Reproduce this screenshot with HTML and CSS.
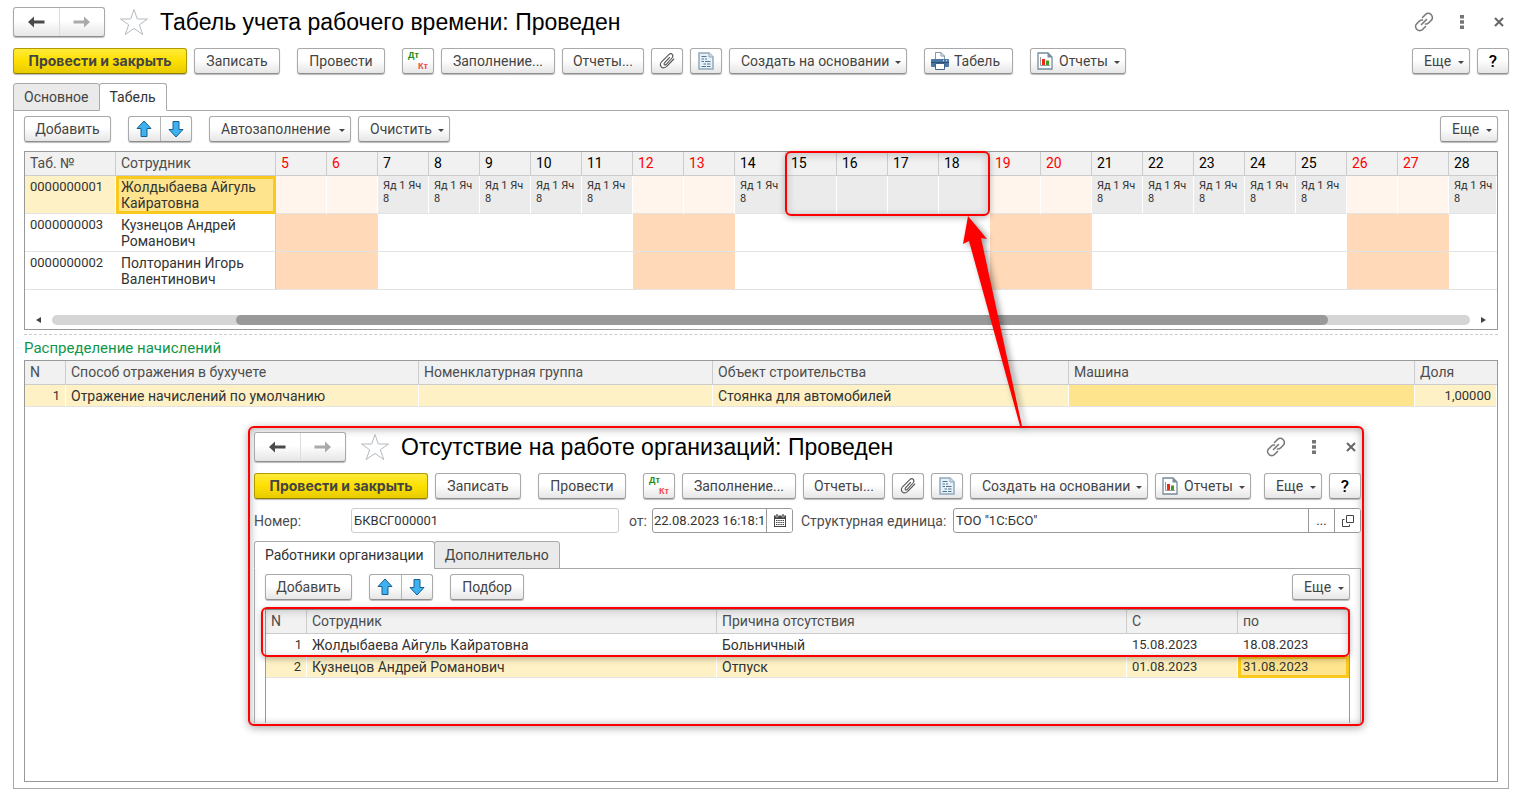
FILE: index.html
```html
<!DOCTYPE html>
<html lang="ru">
<head>
<meta charset="utf-8">
<title>Табель учета рабочего времени: Проведен</title>
<link rel="stylesheet" href="styles.css">
</head>
<body>
<svg class="sprite" aria-hidden="true">
  <symbol id="i-back" viewBox="0 0 18 12"><path d="M1 6 7 .5V4.500H17.500V7.500H7V11.500Z"/></symbol>
  <symbol id="i-fwd" viewBox="0 0 18 12"><path d="M17 6 11 .5V4.500H.5V7.500H11V11.500Z"/></symbol>
  <symbol id="i-star" viewBox="0 0 30 28"><path d="M15 1.500 18.300 11H28.500L20.300 16.800 23.800 26.500 15 20.500 6.200 26.500 9.700 16.800 1.500 11H11.700Z" fill="#fff" stroke="#b4bac0"/></symbol>
  <symbol id="i-link" viewBox="0 0 20 20"><g fill="none" stroke="#7a7a7a" stroke-width="1.600" stroke-linecap="round"><path d="M8.500 5.500 11.500 2.500C13 1 15.500 1 17 2.500S19 6.500 17.500 8L14.500 11C13.500 12 12.500 12.200 11.500 12"/><path d="M11.500 14.500 8.500 17.500C7 19 4.500 19 3 17.500S1 13.500 2.500 12L5.500 9C6.500 8 7.500 7.800 8.500 8"/><path d="M7.500 12.500 12.500 7.500"/></g></symbol>
  <symbol id="i-dots" viewBox="0 0 4 14"><path d="M0 0H4V3.500H0ZM0 5.200H4V8.700H0ZM0 10.400H4V14H0Z" fill="#757575"/></symbol>
  <symbol id="i-close" viewBox="0 0 10 10"><path d="M1 1 9 9M9 1 1 9" stroke="#666" stroke-width="2"/></symbol>
  <symbol id="i-up" viewBox="0 0 16 18"><path d="M8 1 15 8.500H11V16.500H5V8.500H1Z" fill="#3fb0f0" stroke="#14608f" stroke-linejoin="round"/></symbol>
  <symbol id="i-down" viewBox="0 0 16 18"><path d="M8 17 1 9.500H5V1.500H11V9.500H15Z" fill="#3fb0f0" stroke="#14608f" stroke-linejoin="round"/></symbol>
  <symbol id="i-clip" viewBox="0 0 18 18"><path d="M11.500 5.500 6.500 10.800C5.300 12.300 6.800 13.600 8.100 12.500L14 6C16.300 3 13.500.4 10.800 2.600L3.800 9.500C.3 13.700 4.300 17.900 8.500 14.600L15.800 7" fill="none" stroke="#555" stroke-width="1.100" stroke-linecap="round"/></symbol>
  <symbol id="i-doc" viewBox="0 0 16 18"><path d="M1 1H11L15 5V17H1Z" fill="#e8f1f8" stroke="#8fa9bc" stroke-width="1.500"/><path d="M11 1V5H15" fill="#cfe0ec" stroke="#8fa9bc"/><path d="M3.500 4.500H8.500M3.500 7H6M7 7H9M3.500 9.500H6M7 9.500H12.500M5.500 12H8M9 12H12.500M3.500 14.500H8M9 14.500H12.500" stroke="#4e7692" stroke-width="1.200"/></symbol>
  <symbol id="i-print" viewBox="0 0 18 18"><path d="M4.500 8V.5H10L13.500 4V8" fill="#fff" stroke="#8497a8"/><path d="M10 .5V4H13.500" fill="none" stroke="#8497a8"/><rect y="7" width="18" height="8" rx="1" fill="#4a77a5"/><path d="M0 10.500H18" stroke="#2c5074"/><path d="M12 8.700H13M15 8.700H16" stroke="#fff"/><path d="M4.500 11.500H13.500V17.500H4.500Z" fill="#fff" stroke="#3f6488"/></symbol>
  <symbol id="i-chart" viewBox="0 0 16 18"><path d="M1 1H11L15 5V17H1Z" fill="#fff" stroke="#748b9c" stroke-width="1.300"/><path d="M10.500 1V5.500H15Z" fill="#748b9c"/><path d="M3.500 5V13.500H13" fill="none" stroke="#999"/><path d="M5 7H8V13H5Z" fill="#f02818"/><path d="M9 8.500H12V13H9Z" fill="#3c9c1c"/></symbol>
  <symbol id="i-cal" viewBox="0 0 12 13"><path d="M0 1.500H12V13H0Z" fill="#444"/><path d="M2 0H4V3H2ZM8 0H10V3H8Z" fill="#444" stroke="#fff" stroke-width=".5"/><path d="M1 5H11V12H1Z" fill="#fff"/><path d="M2 6.500H10M2 8.500H10M2 10.500H10" stroke="#444" stroke-width="1.200" stroke-dasharray="1.500 .7"/></symbol>
  <symbol id="i-open" viewBox="0 0 12 12"><path d="M4.500.5H11.500V7.500H4.500ZM2.500 4.500H.5V11.500H7.500V9.500" fill="none" stroke="#444"/></symbol>
</svg>

<main class="window">
  <header class="titlebar">
    <div class="pair nav"><button aria-label="Назад"><svg class="arrow"><use href="#i-back"/></svg></button><button aria-label="Вперед" class="dim"><svg class="arrow"><use href="#i-fwd"/></svg></button></div>
    <svg class="star"><use href="#i-star"/></svg>
    <h1>Табель учета рабочего времени: Проведен</h1>
    <div class="tools"><svg class="link"><use href="#i-link"/></svg><svg class="dots"><use href="#i-dots"/></svg><svg class="close"><use href="#i-close"/></svg></div>
  </header>

  <div class="toolbar">
    <button class="btn primary">Провести и закрыть</button>
    <button class="btn w-save">Записать</button>
    <button class="btn w-post group">Провести</button>
    <button class="btn icon group" aria-label="Проводки"><span class="dk"><b>Дт</b><b>Кт</b></span></button>
    <button class="btn w-fill">Заполнение...</button>
    <button class="btn w-rep">Отчеты...</button>
    <button class="btn icon" aria-label="Файлы"><svg class="i18"><use href="#i-clip"/></svg></button>
    <button class="btn icon" aria-label="Документ"><svg class="i16"><use href="#i-doc"/></svg></button>
    <button class="btn drop w-create">Создать на основании<i class="caret"></i></button>
    <button class="btn w-print group"><svg class="i18"><use href="#i-print"/></svg>Табель</button>
    <button class="btn drop w-chart group"><svg class="i16"><use href="#i-chart"/></svg>Отчеты<i class="caret"></i></button>
    <button class="btn drop w-more end">Еще<i class="caret"></i></button>
    <button class="btn icon help">?</button>
  </div>

  <nav class="tabs"><button class="tab">Основное</button><button class="tab active">Табель</button></nav>

  <section class="panel">
    <div class="toolbar inner">
      <button class="btn w-add">Добавить</button>
      <div class="pair move group"><button aria-label="Вверх"><svg class="i16"><use href="#i-up"/></svg></button><button aria-label="Вниз"><svg class="i16"><use href="#i-down"/></svg></button></div>
      <button class="btn drop w-auto group">Автозаполнение<i class="caret"></i></button>
      <button class="btn drop w-clear">Очистить<i class="caret"></i></button>
      <button class="btn drop w-more end">Еще<i class="caret"></i></button>
    </div>

    <div class="frame">
      <table class="sheet">
        <colgroup><col class="c-num"><col class="c-emp"><col class="c-day" span="23"><col></colgroup>
        <thead><tr><th>Таб. №</th><th>Сотрудник</th><th class="day off">5</th><th class="day off">6</th><th class="day">7</th><th class="day">8</th><th class="day">9</th><th class="day">10</th><th class="day">11</th><th class="day off">12</th><th class="day off">13</th><th class="day">14</th><th class="day">15</th><th class="day">16</th><th class="day">17</th><th class="day">18</th><th class="day off">19</th><th class="day off">20</th><th class="day">21</th><th class="day">22</th><th class="day">23</th><th class="day">24</th><th class="day">25</th><th class="day off">26</th><th class="day off">27</th><th class="day">28</th></tr></thead>
        <tbody>
          <tr class="current"><td class="num">0000000001</td><td class="emp focus">Жолдыбаева Айгуль Кайратовна</td><td class="off"></td><td class="off"></td><td>Яд 1 Яч 8</td><td>Яд 1 Яч 8</td><td>Яд 1 Яч 8</td><td>Яд 1 Яч 8</td><td>Яд 1 Яч 8</td><td class="off"></td><td class="off"></td><td>Яд 1 Яч 8</td><td></td><td></td><td></td><td></td><td class="off"></td><td class="off"></td><td>Яд 1 Яч 8</td><td>Яд 1 Яч 8</td><td>Яд 1 Яч 8</td><td>Яд 1 Яч 8</td><td>Яд 1 Яч 8</td><td class="off"></td><td class="off"></td><td>Яд 1 Яч 8</td></tr>
          <tr><td class="num">0000000003</td><td class="emp">Кузнецов Андрей Романович</td><td class="off"></td><td class="off"></td><td></td><td></td><td></td><td></td><td></td><td class="off"></td><td class="off"></td><td></td><td></td><td></td><td></td><td></td><td class="off"></td><td class="off"></td><td></td><td></td><td></td><td></td><td></td><td class="off"></td><td class="off"></td><td></td></tr>
          <tr><td class="num">0000000002</td><td class="emp">Полторанин Игорь Валентинович</td><td class="off"></td><td class="off"></td><td></td><td></td><td></td><td></td><td></td><td class="off"></td><td class="off"></td><td></td><td></td><td></td><td></td><td></td><td class="off"></td><td class="off"></td><td></td><td></td><td></td><td></td><td></td><td class="off"></td><td class="off"></td><td></td></tr>
        </tbody>
      </table>
      <div class="scroll"><i class="tri left"></i><div class="track"><div class="thumb"></div></div><i class="tri right"></i></div>
    </div>

    <h2>Распределение начислений</h2>
    <div class="frame grow">
      <table class="list">
        <colgroup><col class="c-n"><col class="c-way"><col class="c-nom"><col class="c-obj"><col><col class="c-share"></colgroup>
        <thead><tr><th>N</th><th>Способ отражения в бухучете</th><th>Номенклатурная группа</th><th>Объект строительства</th><th>Машина</th><th>Доля</th></tr></thead>
        <tbody><tr class="current"><td class="right num">1</td><td>Отражение начислений по умолчанию</td><td></td><td>Стоянка для автомобилей</td><td class="selected"></td><td class="right num">1,00000</td></tr></tbody>
      </table>
    </div>
  </section>
</main>

<div class="mark days"></div>

<section class="dialog">
  <div class="content">
    <header class="titlebar">
      <div class="pair nav"><button aria-label="Назад"><svg class="arrow"><use href="#i-back"/></svg></button><button aria-label="Вперед" class="dim"><svg class="arrow"><use href="#i-fwd"/></svg></button></div>
      <svg class="star"><use href="#i-star"/></svg>
      <h1>Отсутствие на работе организаций: Проведен</h1>
      <div class="tools"><svg class="link"><use href="#i-link"/></svg><svg class="dots"><use href="#i-dots"/></svg><svg class="close"><use href="#i-close"/></svg></div>
    </header>
    <div class="toolbar">
      <button class="btn primary">Провести и закрыть</button>
      <button class="btn w-save">Записать</button>
      <button class="btn w-post group">Провести</button>
      <button class="btn icon group" aria-label="Проводки"><span class="dk"><b>Дт</b><b>Кт</b></span></button>
      <button class="btn w-fill">Заполнение...</button>
      <button class="btn w-rep">Отчеты...</button>
      <button class="btn icon" aria-label="Файлы"><svg class="i18"><use href="#i-clip"/></svg></button>
      <button class="btn icon" aria-label="Документ"><svg class="i16"><use href="#i-doc"/></svg></button>
      <button class="btn drop w-create">Создать на основании<i class="caret"></i></button>
      <button class="btn drop w-chart"><svg class="i16"><use href="#i-chart"/></svg>Отчеты<i class="caret"></i></button>
      <button class="btn drop w-more end">Еще<i class="caret"></i></button>
      <button class="btn icon help">?</button>
    </div>
    <div class="fields">
      <label class="l-num" for="number">Номер:</label>
      <input id="number" class="box pale" value="БКВСГ000001">
      <label class="l-date" for="date">от:</label>
      <div class="box combo date"><input id="date" value="22.08.2023 16:18:1"><button aria-label="Календарь"><svg class="cal"><use href="#i-cal"/></svg></button></div>
      <label class="l-org" for="org">Структурная единица:</label>
      <div class="box combo org"><input id="org" value='ТОО "1С:БСО"'><button aria-label="Выбрать">...</button><button aria-label="Открыть"><svg class="open"><use href="#i-open"/></svg></button></div>
    </div>
    <nav class="tabs"><button class="tab active">Работники организации</button><button class="tab">Дополнительно</button></nav>
    <div class="panel">
      <div class="toolbar inner">
        <button class="btn w-add">Добавить</button>
        <div class="pair move group"><button aria-label="Вверх"><svg class="i16"><use href="#i-up"/></svg></button><button aria-label="Вниз"><svg class="i16"><use href="#i-down"/></svg></button></div>
        <button class="btn w-pick group">Подбор</button>
        <button class="btn drop w-more end">Еще<i class="caret"></i></button>
      </div>
      <div class="frame grow">
        <table class="list">
          <colgroup><col class="c-n"><col><col><col class="c-date"><col class="c-date"></colgroup>
          <thead><tr><th>N</th><th>Сотрудник</th><th>Причина отсутствия</th><th>С</th><th>по</th></tr></thead>
          <tbody>
            <tr><td class="right num">1</td><td>Жолдыбаева Айгуль Кайратовна</td><td>Больничный</td><td class="num">15.08.2023</td><td class="num">18.08.2023</td></tr>
            <tr class="current"><td class="right num">2</td><td>Кузнецов Андрей Романович</td><td>Отпуск</td><td class="num">01.08.2023</td><td class="num focus">31.08.2023</td></tr>
          </tbody>
        </table>
      </div>
    </div>
  </div>
  <div class="mark rows"></div>
</section>

<svg class="pointer" viewBox="0 0 70 216" aria-hidden="true"><path d="M13 3 32 26 26 25 67 213H65L14 28 8 31Z" fill="#f00"/></svg>
</body>
</html>
```
FILE: styles.css
```css
* { box-sizing: border-box; }

body {
  position: relative;
  margin: 0;
  min-height: 100vh;
  background: #fff;
  color: #333;
  font: 14px/16px Roboto, "Liberation Sans", sans-serif;
  overflow: hidden;
}

button, input { font: inherit; color: inherit; margin: 0; }
svg { display: block; flex: none; }
h1, h2 { margin: 0; font-weight: 400; }
.sprite { position: absolute; width: 0; height: 0; }

.window {
  display: flex;
  flex-direction: column;
  min-height: 100vh;
  padding: 7px 12px 7px 13px;
}

.titlebar { display: flex; align-items: center; height: 30px; }
.titlebar h1 {
  margin-left: 11px;
  font: 23px/28px "Liberation Sans", sans-serif;
  color: #000;
  white-space: nowrap;
}
.star { width: 30px; height: 28px; margin-left: 14px; }
.tools { display: flex; align-items: center; gap: 26px; margin-left: auto; padding-right: 5px; }
.link { width: 20px; height: 20px; }
.dots { width: 4px; height: 14px; }
.close { width: 10px; height: 10px; margin-left: 4px; }

.btn, .pair {
  display: flex;
  align-items: center;
  flex: none;
  height: 26px;
  border: 1px solid #a9a9a9;
  border-bottom-color: #8e8e8e;
  border-radius: 3px;
  background: linear-gradient(#fff 45%, #e6e6e6);
  box-shadow: 0 1px 1px #bbb;
  color: #444;
}
.btn { justify-content: center; padding: 0; white-space: nowrap; }
.pair button {
  display: flex;
  align-items: center;
  justify-content: center;
  flex: 1;
  height: 100%;
  padding: 0;
  border: 0;
  background: none;
}
.pair button + button { border-left: 1px solid #b5b5b5; }
.nav { width: 92px; height: 30px; fill: #4a4a4a; }
.nav .dim { fill: #aaa; }
.nav button + button { border-left-color: #ddd; }
.arrow { width: 18px; height: 12px; }
.move { width: 64px; }

.btn.primary {
  width: 174px;
  border-color: #b09a00;
  border-bottom-color: #8e7c00;
  background: linear-gradient(#ffea3a, #fde000 50%, #e8cb00);
  font-family: Inter, sans-serif;
  font-weight: 700;
}
.icon { width: 32px; }
.i16 { width: 16px; height: 18px; }
.i18 { width: 18px; height: 18px; }
.drop { justify-content: flex-start; padding: 0 5px 0 11px; }
.caret {
  margin: 2px 0 0 auto;
  border: 3px solid transparent;
  border-top-color: #444;
  border-bottom: 0;
}
.help { color: #000; font-size: 17px; font-weight: 500; }
.dk { display: flex; flex-direction: column; width: 20px; font: 9px/11px "Liberation Sans", sans-serif; }
.dk b:first-child { color: #258a12; text-align: left; }
.dk b:last-child { color: #f54a4a; text-align: right; }
.w-save { width: 86px; }
.w-post { width: 88px; }
.w-fill { width: 114px; }
.w-rep { width: 82px; }
.w-create { width: 178px; }
.w-print { width: 89px; gap: 5px; justify-content: flex-start; padding-left: 6px; }
.w-chart { width: 96px; padding-left: 6px; gap: 6px; }
.w-more { width: 58px; }
.w-add { width: 87px; }
.w-auto { width: 142px; }
.w-clear { width: 92px; }
.w-pick { width: 74px; }

.toolbar { display: flex; gap: 7px; margin-top: 11px; }
.toolbar.inner { margin-top: 5px; }
.group { margin-left: 10px; }
.end { margin-left: auto; }

.tabs { display: flex; margin-top: 9px; position: relative; z-index: 1; }
.dialog .tabs { margin-top: 8px; }
.tab {
  height: 28px;
  padding: 0 10px 1px;
  border: 1px solid #a9a9a9;
  border-radius: 3px 3px 0 0;
  background: #eaeaea;
  color: #444;
}
.tab + .tab { margin-left: -1px; }
.tab.active { border-bottom-color: #fff; background: #fff; color: #333; }

.panel {
  display: flex;
  flex-direction: column;
  flex: 1;
  margin-top: -1px;
  padding: 0 10px 6px;
  border: 1px solid #a9a9a9;
}

.frame { margin-top: 9px; border: 1px solid #999; }
.grow { flex: 1; }

table { width: 100%; table-layout: fixed; border-collapse: separate; border-spacing: 0; }
th {
  height: 24px;
  padding: 0 0 1px 5px;
  border: solid #ccc;
  border-width: 0 1px 1px 0;
  background: #f1f1f1;
  color: #4d4d4d;
  font-weight: 400;
  text-align: left;
  white-space: nowrap;
}
td { overflow: hidden; border-bottom: 1px solid #e3e3e3; }
th:last-child { border-right: 0; }
.num { font-size: 13px; }

.c-num { width: 91px; }
.c-emp { width: 160px; }
.c-day { width: 51px; }
.sheet td {
  height: 38px;
  padding: 3px 0 0 5px;
  font-size: 11px;
  line-height: 13px;
  vertical-align: top;
}
.sheet .day { padding-left: 5px; color: #000; }
.sheet .day.off { color: #f00; }
.sheet .emp { border-right: 1px solid #ccc; font-size: 14px; line-height: 16px; }
.sheet .num { font-size: 13px; line-height: 16px; }
.sheet .off { background: #ffd9b8; }
.sheet th.off { background: #f1f1f1; }
.sheet .current td { border-right: 1px solid #fff; background: #ebebeb; }
.sheet .current .off { background: #fff5ec; }
.current td, .sheet .current .num { background: #fdf1c5; border-right: 1px solid #fff; }
.current .focus, .sheet .current .focus {
  border: 0;
  background: #fee48c;
  box-shadow: inset 0 0 0 3px #fac91e;
}

.scroll { display: flex; align-items: center; gap: 11px; margin: 25px 11px 4px; }
.track { flex: 1; height: 10px; border-radius: 5px; background: #d5d5d5; }
.thumb { width: 77%; height: 10px; margin-left: 13%; border-radius: 5px; background: #999; }
.tri { border: 3px solid transparent; }
.tri.left { border-right: 5px solid #444; border-left: 0; }
.tri.right { border-left: 5px solid #444; border-right: 0; }

h2 {
  margin-top: 4px;
  padding-top: 3px;
  border-top: 1px dashed #ccc;
  color: #0f9648;
  font: 15px/20px Roboto, sans-serif;
}
h2 + .frame { margin-top: 2px; }

.list td { height: 22px; padding: 0 5px; white-space: nowrap; }
.list .right { text-align: right; }
.list .current .selected { background: #fee48c; }
.c-n { width: 41px; }
.c-way { width: 353px; }
.c-nom { width: 294px; }
.c-obj { width: 356px; }
.c-share { width: 82px; }
.c-date { width: 111px; }

.mark {
  position: absolute;
  border: 2px solid #f00;
  border-radius: 6px;
  box-shadow: 0 2px 6px #0004, inset 0 2px 8px #0003;
}
.days { left: 785px; top: 151px; width: 205px; height: 65px; }
.rows { left: 11px; right: 12px; top: 179px; height: 50px; }

.dialog {
  position: absolute;
  left: 248px;
  right: 157px;
  top: 426px;
  height: 300px;
  border: 2px solid #f00;
  border-radius: 6px;
  background: #fff;
  box-shadow: 0 2px 8px #0005, inset 0 1px 8px #0005;
}
.content { display: flex; flex-direction: column; height: 295px; padding: 4px 1px 0 4px; overflow: hidden; }
.dialog .panel { padding-bottom: 0; border-bottom: 0; }
.dialog .frame { border-bottom: 0; }

.fields { display: flex; align-items: center; margin-top: 9px; white-space: nowrap; color: #4d4d4d; }
.box { height: 25px; border: 1px solid #999; border-radius: 3px; background: #fff; color: #333; font-size: 13px; }
.pale { width: 268px; padding: 0 2px; border-color: #ccc; }
.combo { display: flex; overflow: hidden; }
.combo input { flex: 1; min-width: 0; padding: 0 0 0 2px; border: 0; outline: 0; background: none; }
.combo button {
  display: flex;
  align-items: center;
  justify-content: center;
  width: 26px;
  padding: 0;
  border: 0;
  border-left: 1px solid #999;
  background: #fff;
}
.l-num { width: 97px; }
.l-date { margin-left: 10px; width: 23px; }
.l-org { margin-left: 8px; width: 152px; }
.date { width: 141px; }
.date input { padding-left: 1px; }
.org { flex: 1; }
.cal { width: 12px; height: 13px; }
.open { width: 12px; height: 12px; }

.pointer {
  position: absolute;
  left: 955px;
  top: 213px;
  width: 70px;
  height: 216px;
  filter: drop-shadow(3px 2px 3px #0006);
}
```
